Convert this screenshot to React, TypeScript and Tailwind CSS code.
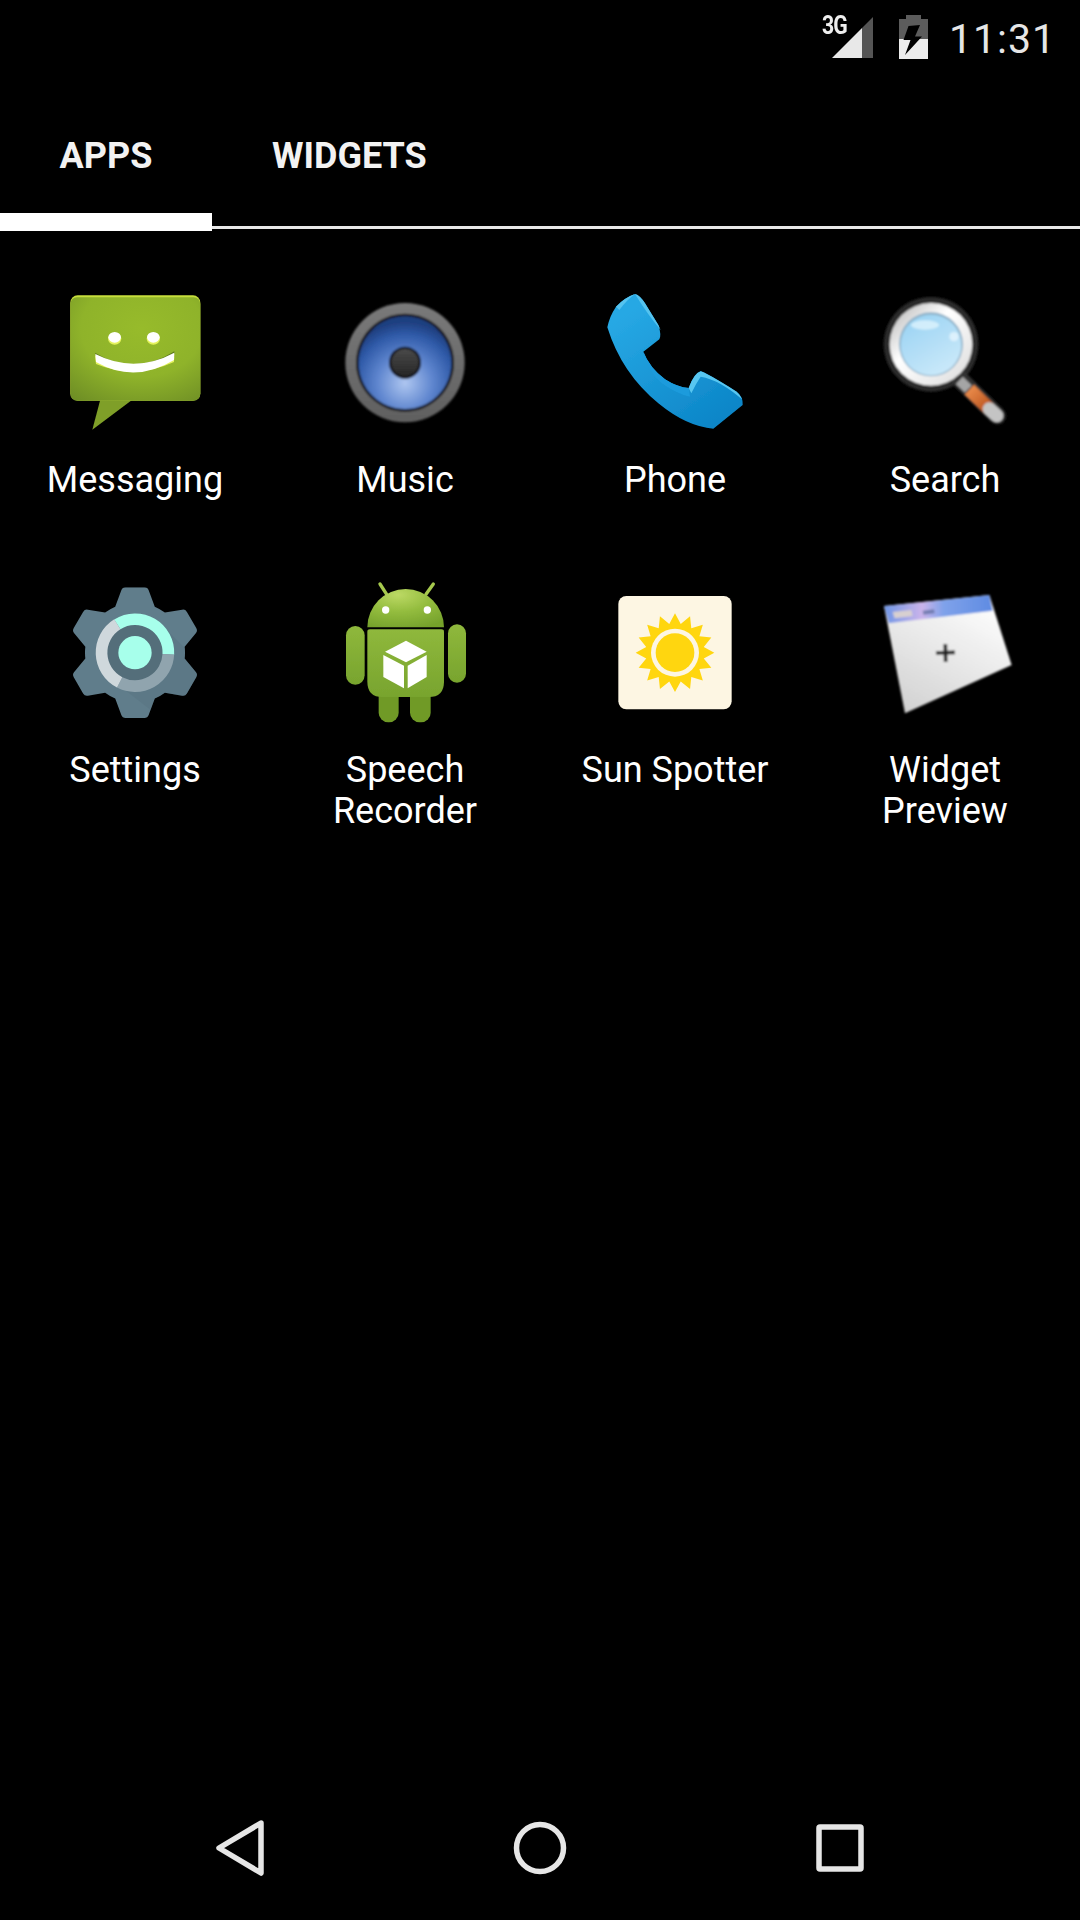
import type { ReactNode } from 'react'

function IconSvg({ viewBox, children }: { viewBox: string; children: ReactNode }) {
  return (
    <svg width="144" height="144" viewBox={viewBox} className="overflow-visible shrink-0">
      {children}
    </svg>
  )
}

function MessagingIcon() {
  return (
    <IconSvg viewBox="69 30 432 432">
      <defs>
        <radialGradient id="msgBody" cx="0.55" cy="0.3" r="0.85">
          <stop offset="0" stopColor="#97bb2b" />
          <stop offset="0.55" stopColor="#8fb32a" />
          <stop offset="1" stopColor="#6f8f25" />
        </radialGradient>
      </defs>
      <path d="M182 355 L157 449 L276 360 Z" fill="#7f9f28" />
      <rect x="91" y="46" width="390" height="316" rx="22" fill="#c6de3c" />
      <rect x="91" y="52" width="390" height="310" rx="20" fill="url(#msgBody)" />
      <ellipse cx="224" cy="176" rx="20" ry="18" fill="#e4f25c" />
      <ellipse cx="340" cy="176" rx="20" ry="18" fill="#e4f25c" />
      <ellipse cx="224" cy="172" rx="19" ry="16" fill="#fff" />
      <ellipse cx="340" cy="172" rx="19" ry="16" fill="#fff" />
      <path d="M165 218 Q284 290 403 214 L403 230 Q284 300 171 240 Z" fill="#5f7d1c" />
      <path d="M165 226 Q284 322 403 222 L402 246 Q284 300 168 252 Z" fill="#e4f25c" />
      <path d="M166 222 Q284 282 403 218 L402 240 Q284 312 168 246 Z" fill="#fff" />
    </IconSvg>
  )
}

function MusicIcon() {
  return (
    <IconSvg viewBox="39 30 432 432">
      <defs>
        <radialGradient id="cone" cx="0.5" cy="0.72" r="0.66">
          <stop offset="0" stopColor="#aec6f0" />
          <stop offset="0.45" stopColor="#5f86cf" />
          <stop offset="0.8" stopColor="#2f5aa8" />
          <stop offset="1" stopColor="#1f3f80" />
        </radialGradient>
        <linearGradient id="capFace" x1="0" y1="0" x2="0" y2="1">
          <stop offset="0" stopColor="#4a4a4a" />
          <stop offset="1" stopColor="#262626" />
        </linearGradient>
        <linearGradient id="speakerRing" x1="0" y1="0" x2="0" y2="1">
          <stop offset="0" stopColor="#7a7a7a" />
          <stop offset="1" stopColor="#606060" />
        </linearGradient>
        <filter id="musicSoft">
          <feGaussianBlur stdDeviation="2.5" />
        </filter>
      </defs>
      <g filter="url(#musicSoft)">
        <circle cx="255" cy="248" r="179" fill="url(#speakerRing)" />
        <circle cx="255" cy="248" r="147" fill="#14171f" />
        <circle cx="255" cy="248" r="139" fill="url(#cone)" />
        <circle cx="255" cy="248" r="48" fill="#111114" />
        <circle cx="255" cy="248" r="41" fill="url(#capFace)" />
      </g>
    </IconSvg>
  )
}

function PhoneIcon() {
  return (
    <IconSvg viewBox="39 30 432 432">
      <defs>
        <linearGradient id="phoneBody" x1="0.2" y1="0.1" x2="0.8" y2="0.95">
          <stop offset="0" stopColor="#27a8e4" />
          <stop offset="1" stopColor="#0c86c8" />
        </linearGradient>
        <filter id="phoneSoft">
          <feGaussianBlur stdDeviation="1.5" />
        </filter>
      </defs>
      <g filter="url(#phoneSoft)">
        <path
          d="M135 42 Q150 46 165 70 L205 135 Q215 165 208 178 L160 215 Q178 262 225 298 Q262 322 296 324 Q312 280 332 274 Q345 276 440 335 Q460 350 458 375 L370 446 Q290 440 205 370 Q95 280 52 142 Q58 110 78 80 Q105 52 135 42 Z"
          fill="url(#phoneBody)"
        />
        <path d="M135 42 Q150 46 165 70 L205 135 L212 150 Q170 100 135 42 Q110 60 88 90 L78 80 Q105 52 135 42 Z" fill="#54c3ef" />
        <path d="M332 274 Q345 276 440 335 Q452 345 456 358 Q390 300 332 290 Q318 310 304 340 L296 324 Q312 280 332 274 Z" fill="#58c6f0" />
        <path d="M160 215 Q178 262 225 298 Q262 322 296 324 L300 350 Q255 340 210 305 Q170 265 160 215 Z" fill="#1d9bdc" />
      </g>
    </IconSvg>
  )
}

function SearchIcon() {
  return (
    <IconSvg viewBox="9 15 432 432">
      <defs>
        <linearGradient id="glass" x1="0.2" y1="0" x2="0.8" y2="1">
          <stop offset="0" stopColor="#9ad3f3" />
          <stop offset="1" stopColor="#cdeafa" />
        </linearGradient>
        <linearGradient id="rim" x1="0" y1="0" x2="1" y2="1">
          <stop offset="0" stopColor="#b0b0b0" />
          <stop offset="0.4" stopColor="#ffffff" />
          <stop offset="1" stopColor="#dadada" />
        </linearGradient>
        <linearGradient id="handle" x1="0" y1="0" x2="1" y2="1">
          <stop offset="0" stopColor="#e98a4a" />
          <stop offset="1" stopColor="#b9521c" />
        </linearGradient>
        <filter id="searchSoft">
          <feGaussianBlur stdDeviation="3" />
        </filter>
      </defs>
      <g filter="url(#searchSoft)">
        <circle cx="183" cy="178" r="142" fill="#2c2c2c" />
        <line x1="272" y1="285" x2="382" y2="392" stroke="#333333" strokeWidth="52" strokeLinecap="round" />
        <line x1="268" y1="286" x2="295" y2="312" stroke="#a5a5a5" strokeWidth="30" />
        <line x1="298" y1="314" x2="358" y2="372" stroke="url(#handle)" strokeWidth="40" />
        <line x1="358" y1="372" x2="380" y2="392" stroke="#c4c4c4" strokeWidth="40" strokeLinecap="round" />
        <circle cx="183" cy="178" r="124" fill="url(#rim)" />
        <circle cx="183" cy="178" r="96" fill="#8fb2c9" />
        <circle cx="183" cy="180" r="91" fill="url(#glass)" />
        <ellipse cx="165" cy="120" rx="42" ry="14" fill="#e6f6fe" opacity="0.7" />
        <circle cx="252" cy="155" r="14" fill="#ecf8ff" opacity="0.7" />
      </g>
    </IconSvg>
  )
}

function SettingsIcon() {
  const teeth = [0, 60, 120, 180, 240, 300]
  const tooth = 'M162 105 L184 46 Q187 37 197 37 L253 37 Q263 37 266 46 L288 105 Z'
  return (
    <IconSvg viewBox="9 15 432 432">
      <defs>
        <clipPath id="gearClip">
          <circle cx="225" cy="233" r="150" />
          {teeth.map(a => (
            <path key={a} d={tooth} transform={`rotate(${a} 225 233)`} />
          ))}
        </clipPath>
      </defs>
      <g clipPath="url(#gearClip)">
        <rect x="0" y="0" width="450" height="450" fill="#607d8b" />
        <path d="M305 150 L460 305 L330 450 L150 310 Z" fill="#546e7a" opacity="0.3" />
      </g>
      <circle cx="225" cy="233" r="85" fill="#546e7a" />
      <g fill="none" strokeWidth="35">
        <path d="M172 148 A100 100 0 0 1 325 238" stroke="#a7ffeb" />
        <path d="M325 238 A100 100 0 0 1 179 322" stroke="#90a4ae" />
        <path d="M179 322 A100 100 0 0 1 172 148" stroke="#cfd8dc" />
      </g>
      <circle cx="225" cy="233" r="50" fill="#a7ffeb" />
    </IconSvg>
  )
}

function AndroidIcon() {
  return (
    <IconSvg viewBox="9 15 432 432">
      <defs>
        <radialGradient id="droid" cx="0.4" cy="0.15" r="0.9">
          <stop offset="0" stopColor="#bcd964" />
          <stop offset="0.5" stopColor="#93bc3e" />
          <stop offset="1" stopColor="#76a22c" />
        </radialGradient>
        <linearGradient id="droidBody" x1="0" y1="0" x2="0" y2="1">
          <stop offset="0" stopColor="#8fb83c" />
          <stop offset="1" stopColor="#78a42e" />
        </linearGradient>
        <filter id="droidSoft">
          <feGaussianBlur stdDeviation="1.5" />
        </filter>
      </defs>
      <g filter="url(#droidSoft)">
        <line x1="150" y1="27" x2="170" y2="58" stroke="#a6c94d" strokeWidth="10" strokeLinecap="round" />
        <line x1="310" y1="27" x2="288" y2="58" stroke="#a6c94d" strokeWidth="10" strokeLinecap="round" />
        <path d="M112 157 A115 115 0 0 1 342 157 Z" fill="url(#droid)" />
        <circle cx="167" cy="105" r="11" fill="#fff" />
        <circle cx="292" cy="105" r="11" fill="#fff" />
        <rect x="146" y="330" width="60" height="112" rx="29" fill="#6f9a28" />
        <rect x="240" y="330" width="62" height="112" rx="29" fill="#6f9a28" />
        <rect x="48" y="153" width="56" height="176" rx="28" fill="url(#droidBody)" />
        <rect x="354" y="148" width="54" height="175" rx="27" fill="url(#droidBody)" />
        <path d="M112 170 Q112 163 120 163 L334 163 Q342 163 342 170 L342 320 Q342 366 296 366 L158 366 Q112 366 112 320 Z" fill="url(#droidBody)" />
        <g fill="#fff">
          <path d="M228 197 L290 230 L228 262 L165 230 Z" />
          <path d="M160 240 L222 272 L222 340 L160 306 Z" />
          <path d="M233 272 L290 240 L290 306 L233 340 Z" />
        </g>
      </g>
    </IconSvg>
  )
}

function SunIcon() {
  const pts: string[] = []
  for (let i = 0; i < 32; i++) {
    const r = i % 2 === 0 ? 118 : 88
    const a = (i * Math.PI) / 16
    pts.push(`${225 + r * Math.sin(a)},${218 - r * Math.cos(a)}`)
  }
  return (
    <IconSvg viewBox="9 0 432 432">
      <rect x="55" y="48" width="340" height="340" rx="24" fill="#fdf6e3" />
      <polygon points={pts.join(' ')} fill="#ffd60f" />
      <circle cx="225" cy="218" r="72" fill="#fdf6e3" />
      <circle cx="225" cy="218" r="58" fill="#ffd60f" />
    </IconSvg>
  )
}

function WidgetIcon() {
  return (
    <IconSvg viewBox="9 0 432 432">
      <defs>
        <linearGradient id="page" x1="0.8" y1="0" x2="0.2" y2="1">
          <stop offset="0" stopColor="#ffffff" />
          <stop offset="1" stopColor="#d2d2d2" />
        </linearGradient>
        <linearGradient id="titlebar" x1="0" y1="0" x2="1" y2="0">
          <stop offset="0" stopColor="#6f96e6" />
          <stop offset="0.35" stopColor="#cbb4ea" />
          <stop offset="0.55" stopColor="#7fa2ea" />
          <stop offset="1" stopColor="#5f8be2" />
        </linearGradient>
        <filter id="soft">
          <feGaussianBlur stdDeviation="2.5" />
        </filter>
      </defs>
      <g filter="url(#soft)">
        <path d="M42 78 L358 45 L425 255 L105 400 Z" fill="url(#page)" />
        <path d="M42 78 L358 45 L368 92 L56 130 Z" fill="url(#titlebar)" />
        <path d="M68 96 L124 90 L128 108 L74 115 Z" fill="#d8d0d0" />
        <path d="M158 92 L192 88 L194 100 L160 104 Z" fill="#5a6a9a" opacity="0.7" />
        <path d="M198 219 L255 217" stroke="#222" strokeWidth="11" />
        <path d="M226 192 L227 246" stroke="#222" strokeWidth="11" />
      </g>
    </IconSvg>
  )
}

const apps = [
  { label: 'Messaging', icon: <MessagingIcon /> },
  { label: 'Music', icon: <MusicIcon /> },
  { label: 'Phone', icon: <PhoneIcon /> },
  { label: 'Search', icon: <SearchIcon /> },
  { label: 'Settings', icon: <SettingsIcon /> },
  { label: 'Speech Recorder', icon: <AndroidIcon /> },
  { label: 'Sun Spotter', icon: <SunIcon /> },
  { label: 'Widget Preview', icon: <WidgetIcon /> },
]

function StatusBar() {
  return (
    <div className="h-[75px] flex justify-end items-start pr-[24px]">
      {/* Signal with 3G */}
      <div className="relative w-[52px] h-[60px] mr-[26px]">
        <span className="absolute left-[1px] top-[13px] text-[25px] leading-[26px] font-bold tracking-[-1px] text-[#eeeeee] font-['Roboto',sans-serif] scale-x-[0.85] origin-left">
          3G
        </span>
        <svg width="52" height="60" viewBox="821 0 52 60" className="absolute left-0 top-0">
          <path d="M832 58 L862 28 L862 58 Z" fill="#e8e8e8" />
          <path d="M862 28 L873 17 L873 58 L862 58 Z" fill="#555555" />
        </svg>
      </div>
      {/* Battery */}
      <svg width="29" height="44" viewBox="0 0 29 44" className="mt-[15px] mr-[21px]">
        <path d="M7 0 H22 V4 H29 V44 H0 V4 H7 Z" fill="#5c5c5c" />
        <path d="M0 24 H29 V44 H0 Z" fill="#ececec" />
        <path d="M9.5 11 L21 10 L16 21.5 L23 21.5 L6 40 L11.5 25 L4.5 25 Z" fill="#000" />
      </svg>
      <span className="mt-[15px] text-[41px] leading-[48px] tracking-[1px] text-[#e6e6e6] font-['Roboto',sans-serif]">
        11:31
      </span>
    </div>
  )
}

function Tabs() {
  return (
    <div className="flex h-[156px] font-['Roboto',sans-serif] text-[36px] font-bold leading-[45px] text-[#f2f2f2]">
      <div className="w-[212px] flex flex-col items-center pt-[59px]">
        <span className="flex-1">APPS</span>
        <div className="w-full h-[18px] bg-white" />
      </div>
      <div className="flex-1 flex flex-col pt-[59px] pl-[60px] pb-[2px]">
        <span className="flex-1">WIDGETS</span>
        <div className="h-[3px] -ml-[60px] bg-[#e8e8e8]" />
      </div>
    </div>
  )
}

function NavBar() {
  return (
    <div className="h-[144px] flex justify-center items-center">
      <div className="w-[300px] flex justify-center">
        <svg width="60" height="60" viewBox="0 0 60 60" fill="none" stroke="#e6e6e6" strokeWidth="5.5" strokeLinejoin="round">
          <path d="M51 5 L9 30 L51 55 Z" />
        </svg>
      </div>
      <div className="w-[300px] flex justify-center">
        <svg width="60" height="60" viewBox="0 0 60 60" fill="none" stroke="#e6e6e6" strokeWidth="5.5">
          <circle cx="30" cy="30" r="23.5" />
        </svg>
      </div>
      <div className="w-[300px] flex justify-center">
        <svg width="60" height="60" viewBox="0 0 60 60" fill="none" stroke="#e6e6e6" strokeWidth="5.5" strokeLinejoin="round">
          <rect x="9" y="9" width="42" height="42" rx="1" />
        </svg>
      </div>
    </div>
  )
}

export default function App() {
  return (
    <div className="w-[1080px] h-[1920px] bg-black flex flex-col overflow-hidden">
      <StatusBar />
      <Tabs />
      <div className="flex-1 grid grid-cols-4 auto-rows-[290px] pt-[59px] content-start">
        {apps.map(app => (
          <div key={app.label} className="flex flex-col items-center px-[24px]">
            {app.icon}
            <span className="mt-[26px] text-center text-[36px] leading-[41px] text-white font-['Roboto',sans-serif]">
              {app.label}
            </span>
          </div>
        ))}
      </div>
      <NavBar />
    </div>
  )
}
